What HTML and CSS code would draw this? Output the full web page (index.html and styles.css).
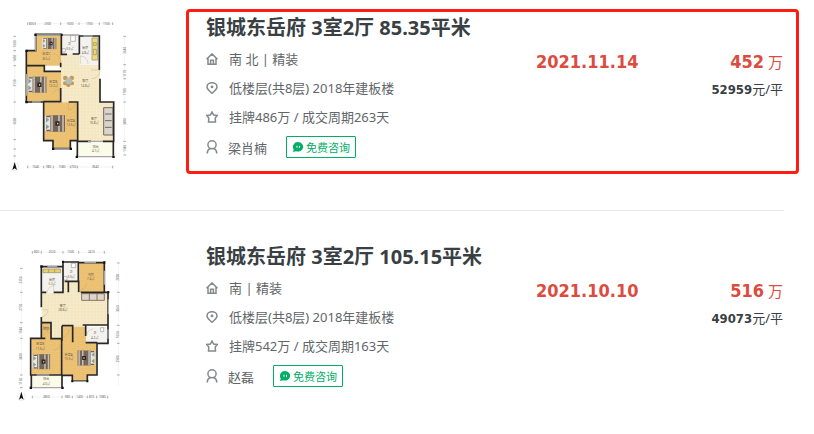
FILE: index.html
```html
<!DOCTYPE html>
<html lang="zh-CN">
<head>
<meta charset="UTF-8">
<meta name="viewport" content="width=device-width, initial-scale=1.0">
<title>银城东岳府 成交记录</title>
<link rel="stylesheet" href="styles.css">
</head>
<body>

<!-- 公用图标 -->
<svg class="defs" width="0" height="0" aria-hidden="true">
  <symbol id="icon-house" viewBox="0 0 12 12">
    <path d="M.5 6.300 6 .9l5.500 5.400M2 5v6.200h2.600V7.200h2.800v4H10V5M4.600 11.200h2.800"/>
  </symbol>
  <symbol id="icon-pin" viewBox="0 0 12 12">
    <path d="M6 11.300C3.700 9 1 7.400 1 4.900a5 4.200 0 0 1 10 0C11 7.400 8.300 9 6 11.300z"/>
    <circle class="dot" cx="6" cy="4.900" r="1.400"/>
  </symbol>
  <symbol id="icon-star" viewBox="0 0 12 12">
    <path d="M6 1 7.600 4.100l3.600.4-2 2.600.3 4H2.500l.3-4-2-2.600 3.600-.4z"/>
  </symbol>
  <symbol id="icon-user" viewBox="0 0 12 14">
    <ellipse cx="6" cy="4.800" rx="4.100" ry="4"/>
    <path d="M4.300 8.500C2.300 9.300 1.200 10.800 1.200 13.500M7.700 8.500c2 .8 3.100 2.300 3.100 5"/>
  </symbol>
  <symbol id="icon-chat" viewBox="0 0 12 12">
    <path class="bubble" d="M6 1a5.300 4.800 0 1 1-2 9.300L1 11l.7-2.500A4.900 4.900 0 0 1 6 1z"/>
    <path class="mark" d="M5 4.800v2M7.500 4.800v2"/>
  </symbol>
  <symbol id="bed" viewBox="0 0 60 50">
    <rect x="0" y="3" width="18" height="44" fill="#e9e5df"/>
    <path d="M3 6l10 8-10 8zM3 27l10 8-10 8z" fill="#7d9fae"/>
    <path d="M4 2h11v4H4zM4 44h11v4H4z" fill="#6b6058"/>
    <rect x="16" y="0" width="44" height="50" fill="#75665c"/>
    <path d="M21 0v50M42 0v50M54 0v50" stroke="#c9bdb0" stroke-width="5"/>
    <path d="M31 18h13v14H31z" fill="#2c2723"/>
    <path d="M36 22l5 3-4 4z" fill="#eee"/>
  </symbol>
  <pattern id="wood" width="24" height="12" patternUnits="userSpaceOnUse">
    <rect width="24" height="12" fill="#edc477"/>
    <path d="M0 1h24M0 7h24M8 1v6M20 7v5" stroke="#e3b562" stroke-width="1"/>
  </pattern>
  <pattern id="tile" width="10" height="10" patternUnits="userSpaceOnUse">
    <rect width="10" height="10" fill="#f6ebcb"/>
    <path d="M0 5l5-5 5 5-5 5z" fill="#f3e5bf"/>
  </pattern>
</svg>

<ul class="deal-list">
  <li class="deal">
    <a class="plan" href="#deal-1" aria-label="户型图">
      <svg viewBox="0 0 420 510" aria-hidden="true">
        <path fill="url(#tile)" d="M182 132h57v32h61v112h40v117H232V276h-50z"/>
        <path fill="url(#wood)" d="M107 75h76v92h-51v18h51v89H80V121h27zM133 277h99v115h-22v24h-50v-24h-27z"/>
        <path fill="#f3f2ef" d="M184 75h51v56h-51zM239 79h58v85h-58z"/>
        <path fill="#fafbe8" d="M231 397h108v42H231z"/>
        <use href="#bed" x="82" y="198" width="58" height="52"/>
        <use href="#bed" x="135" y="314" width="60" height="53"/>
        <use href="#bed" x="119" y="83" width="58" height="35"/>
        <g fill="#c89655"><circle cx="196" cy="204" r="7"/><circle cx="215" cy="204" r="7"/><circle cx="205" cy="224" r="7"/><circle cx="195" cy="220" r="6"/><circle cx="216" cy="220" r="6"/></g>
        <circle cx="206" cy="213" r="10" fill="#a9c0bc"/>
        <path fill="#d9d4cc" stroke="#75665d" stroke-width="3" d="M311 293h28v82h-28zM315 312h20M315 332h20M315 352h20"/>
        <path fill="#f0d879" stroke="#8b8b75" stroke-width="2" d="M276 84h17v66h-17zM280 98h9v8h-9zM280 118h9v16h-9z"/>
        <path fill="#fff" stroke="#9b9b9b" stroke-width="2" d="M212 77h14v17h-14zM186 116h10v10h-10z"/>
        <path class="wall" d="M79 124v152h52v116h28v24h52v-24h22M79 122h28V73h78M184 75v58h17M218 132h19M238 75v58M238 78h60v102M300 206v70h41v118h-33M273 394h-41v45M340 394v43M80 167h53v17h50M182 158v14M182 234v41h-52M206 276h27v118"/>
        <path class="window" d="M107 75h76M184 75h54M250 78h28M79 192v65M160 417h51M231 440h109M264 394h44M107 76v46M96 276h26"/>
        <path class="door" d="M183 158a26 26 0 0 0-26-26M273 180h27a25 25 0 0 1-25 26M158 250a25 25 0 0 1 24-12M205 278v22a24 24 0 0 0 22-22M241 162v-24a23 23 0 0 1 23 24"/>
        <path class="column" d="M103 71h7v7h-7zM182 71h6v7h-6zM76 119h7v7h-7zM76 273h7v7h-7zM156 413h7v7h-7zM209 413h7v7h-7zM227 437h7v7h-7zM337 437h7v7h-7z"/>
        <g class="room">
          <text x="139" y="136">卧室C</text><text x="139" y="149">8.5㎡</text>
          <text x="208" y="104">卫</text><text x="209" y="119">3.5㎡</text>
          <text x="256" y="118">厨房</text><text x="256" y="131">4.8㎡</text>
          <text x="160" y="218">卧室B</text><text x="160" y="231">10.2㎡</text>
          <text x="256" y="217">餐厅</text><text x="256" y="230">14.8㎡</text>
          <text x="213" y="335">卧室A</text><text x="213" y="348">12.6㎡</text>
          <text x="282" y="329">客厅</text><text x="282" y="342">16.8㎡</text>
          <text x="287" y="413">阳台</text><text x="287" y="426">4.7㎡</text>
        </g>
        <path class="ruler" d="M81 41h259M81 471h259M44 79v376M374 79v356"/>
        <path class="ruler-tick" d="M83 37v8M106 37v8M182 37v8M237 37v8M298 37v8M338 37v8M83 467v8M131 467v8M160 467v8M211 467v8M232 467v8M338 467v8M40 79h8M40 122h8M40 167h8M40 276h8M40 389h8M40 417h8M40 438h8M370 79h8M370 164h8M370 206h8M370 276h8M370 394h8M370 435h8"/>
        <g class="measure">
          <text x="95" y="44">800</text><text x="143" y="44">2300</text><text x="210" y="44">1600</text><text x="268" y="44">1760</text><text x="319" y="44">1160</text>
          <text x="107" y="474">1640</text><text x="146" y="474">980</text><text x="186" y="474">1580</text><text x="221" y="474">700</text><text x="286" y="474">3640</text>
          <text transform="translate(47 101) rotate(-90)">1600</text><text transform="translate(47 145) rotate(-90)">1450</text><text transform="translate(47 219) rotate(-90)">3130</text><text transform="translate(47 334) rotate(-90)">3600</text>
          <text transform="translate(377 121) rotate(-90)">2640</text><text transform="translate(377 190) rotate(-90)">1170</text><text transform="translate(377 245) rotate(-90)">1780</text><text transform="translate(377 335) rotate(-90)">3480</text><text transform="translate(377 415) rotate(-90)">1340</text>
        </g>
        <circle class="compass" cx="44" cy="470" r="12"/>
        <path d="M44 456l7 24-7-5-7 5z" fill="#111"/>
      </svg>
    </a>
    <div class="info highlight" id="deal-1">
      <div class="details">
        <h2 class="title">银城东岳府 3室2厅 85.35平米</h2>
        <p class="line"><svg class="icon"><use href="#icon-house"/></svg>南 北 | 精装</p>
        <p class="line"><svg class="icon"><use href="#icon-pin"/></svg>低楼层(共8层) 2018年建板楼</p>
        <p class="line"><svg class="icon"><use href="#icon-star"/></svg>挂牌486万 / 成交周期263天</p>
        <div class="line agent">
          <svg class="icon icon-tall"><use href="#icon-user"/></svg>
          <span class="agent-name">梁肖楠</span>
          <button type="button" class="consult"><svg class="chat"><use href="#icon-chat"/></svg>免费咨询</button>
        </div>
      </div>
      <div class="numbers">
        <div class="date">2021.11.14</div>
        <div class="price">
          <div class="total"><span class="amount">452</span> 万</div>
          <div class="unit"><span class="amount">52959</span>元/平</div>
        </div>
      </div>
    </div>
  </li>

  <li class="deal">
    <a class="plan" href="#deal-2" aria-label="户型图">
      <svg viewBox="0 -3 420 510" aria-hidden="true">
        <path fill="url(#tile)" d="M126 158h64v-34h45v34h89v98h-71v6h-67v55h-33v-69h-27z"/>
        <path fill="url(#wood)" d="M238 69h74v87h-74zM125 249h27v48h32v107H95V295h30zM187 260h72v48h29v98h-26v17h-44v-17h-31z"/>
        <path fill="#f3f2ef" d="M127 83h60v74h-60zM191 67h43v57h-43zM259 260h64v47h-64z"/>
        <path fill="#fafbe8" d="M95 407h91v35H95z"/>
        <use href="#bed" x="97" y="340" width="54" height="50"/>
        <use href="#bed" transform="translate(286 330) scale(-1 1)" width="54" height="48"/>
        <path fill="#ddd5cb" stroke="#8c7364" stroke-width="3" d="M245 161h68v20h-68zM268 161v20M291 161v20"/>
        <path fill="#edcf66" stroke="#8b8b75" stroke-width="2" d="M129 87h53v11h-53zM146 88v9M164 88v9"/>
        <path fill="#fff" stroke="#9b9b9b" stroke-width="2" d="M214 70h13v13h-13zM302 263h9v12h-9zM191 110h10v10h-10z"/>
        <path class="wall" d="M124 202V80h65v77h-28M139 157h-15M189 82V66h46v58h-41M236 68h77v89h-71M220 124h16v33M312 157h12v98h-76M205 157v-33M124 231v64H92v110h56M94 407v36M136 405h50v40M186 406h31v17h45v-18h29v-95h33v-54M125 248h28v48h32v109M186 257v46M186 257h32v50M257 257v31M257 308h35M125 295h11"/>
        <path class="window" d="M142 80h30M253 68h35M313 92v42M325 178v45M94 443h92M217 424h44M324 268v28M110 405h38"/>
        <path class="door" d="M124 209h20a22 22 0 0 1-20 22M142 157a20 20 0 0 1 19-20v20M238 151a21 21 0 0 0 20-20M160 330a24 24 0 0 0 23-20M207 267a22 22 0 0 1-20 24M260 287a20 20 0 0 1 20-20M128 256l20 24M130 288l18-22"/>
        <path class="column" d="M121 76h7v7h-7zM186 62h6v7h-6zM310 64h6v7h-6zM322 153h6v7h-6zM89 440h7v7h-7zM184 440h7v7h-7zM214 421h6v6h-6zM259 421h6v6h-6z"/>
        <g class="room">
          <text x="156" y="122">厨房</text><text x="156" y="135">5.2㎡</text>
          <text x="213" y="98">卫</text><text x="213" y="113">3.3㎡</text>
          <text x="272" y="108">书房</text><text x="272" y="121">7.4㎡</text>
          <text x="188" y="201">客厅</text><text x="188" y="214">28.8㎡</text>
          <text x="138" y="270">储物</text>
          <text x="121" y="316">卧室B</text><text x="121" y="329">11.6㎡</text>
          <text x="206" y="348">卧室A</text><text x="206" y="361">15.5㎡</text>
          <text x="284" y="281">卫</text><text x="284" y="296">4.2㎡</text>
          <text x="139" y="421">阳台</text><text x="139" y="434">4.0㎡</text>
        </g>
        <path class="ruler" d="M95 37h230M95 471h230M64 85v365M355 69v370"/>
        <path class="ruler-tick" d="M97 33v8M124 33v8M189 33v8M236 33v8M313 33v8M97 467v8M186 467v8M217 467v8M262 467v8M290 467v8M323 467v8M60 85h8M60 157h8M60 248h8M60 295h8M60 405h8M60 443h8M351 69h8M351 157h8M351 256h8M351 310h8M351 405h8"/>
        <g class="measure">
          <text x="110" y="40">800</text><text x="156" y="40">2020</text><text x="212" y="40">1500</text><text x="274" y="40">2410</text>
          <text x="139" y="474">2850</text><text x="202" y="474">980</text><text x="239" y="474">1400</text><text x="275" y="474">870</text><text x="307" y="474">1080</text>
          <text transform="translate(67 120) rotate(-90)">2350</text><text transform="translate(67 202) rotate(-90)">2730</text><text transform="translate(67 271) rotate(-90)">1540</text><text transform="translate(67 350) rotate(-90)">3400</text><text transform="translate(67 424) rotate(-90)">1150</text>
          <text transform="translate(358 112) rotate(-90)">2800</text><text transform="translate(358 206) rotate(-90)">3060</text><text transform="translate(358 284) rotate(-90)">1650</text><text transform="translate(358 357) rotate(-90)">2980</text>
        </g>
        <circle class="compass" cx="64" cy="470" r="12"/>
        <path d="M64 455l7 24-7-5-7 5z" fill="#111"/>
      </svg>
    </a>
    <div class="info" id="deal-2">
      <div class="details">
        <h2 class="title">银城东岳府 3室2厅 105.15平米</h2>
        <p class="line"><svg class="icon"><use href="#icon-house"/></svg>南 | 精装</p>
        <p class="line"><svg class="icon"><use href="#icon-pin"/></svg>低楼层(共8层) 2018年建板楼</p>
        <p class="line"><svg class="icon"><use href="#icon-star"/></svg>挂牌542万 / 成交周期163天</p>
        <div class="line agent">
          <svg class="icon icon-tall"><use href="#icon-user"/></svg>
          <span class="agent-name">赵磊</span>
          <button type="button" class="consult"><svg class="chat"><use href="#icon-chat"/></svg>免费咨询</button>
        </div>
      </div>
      <div class="numbers">
        <div class="date">2021.10.10</div>
        <div class="price">
          <div class="total"><span class="amount">516</span> 万</div>
          <div class="unit"><span class="amount">49073</span>元/平</div>
        </div>
      </div>
    </div>
  </li>
</ul>

</body>
</html>
```
FILE: styles.css
```css
body {
  margin: 0;
  background-color: #fff;
  color: #616669;
  font-family: "Noto Sans", "Noto Sans CJK SC", sans-serif;
  font-size: 13px;
}
h2, p, ul {
  margin: 0;
  padding: 0;
}
.defs {
  position: absolute;
}
.deal-list {
  list-style: none;
  margin-right: 30px;
}
.deal {
  display: flex;
  align-items: flex-start;
  padding: 27px 0 30px;
}
.deal:first-child {
  padding-top: 9px;
  border-bottom: 1px solid #e8e8e8;
}
.plan {
  flex: none;
  width: 140px;
  margin-right: 46px;
  padding-top: 1px;
}
.plan svg {
  display: block;
  width: 100%;
}
.info {
  flex: 1;
  display: flex;
  justify-content: space-between;
  margin-right: -15px;
  padding: 0 13px 8px 17px;
  border: 3px solid transparent;
  border-radius: 4px;
}
.highlight {
  border-color: #fe1d12;
}
.title {
  color: #394043;
  font-size: 20px;
  line-height: 32px;
  white-space: nowrap;
}
.line {
  display: flex;
  align-items: center;
  height: 29px;
  white-space: nowrap;
}
.agent {
  height: 32px;
}
.icon {
  flex: none;
  width: 12px;
  height: 12px;
  margin-right: 11px;
  fill: none;
  stroke: #85898c;
  stroke-width: 1.5;
}
.icon-tall {
  height: 14px;
  margin-right: 10px;
}
.dot {
  fill: #85898c;
  stroke: none;
}
.consult {
  display: flex;
  align-items: center;
  height: 22px;
  margin-left: 19px;
  padding: 0 5px;
  border: 1px solid #00ae66;
  border-radius: 1px;
  background-color: #fff;
  color: #00ae66;
  font-family: inherit;
  font-size: 11px;
  cursor: pointer;
}
.chat {
  width: 12px;
  height: 12px;
  margin-right: 2px;
}
.bubble {
  fill: #00ae66;
}
.mark {
  stroke: #fff;
}
.numbers {
  display: flex;
  justify-content: space-between;
  width: 247px;
  padding-top: 36px;
}
.date,
.total {
  color: #db4c3f;
  font-size: 18px;
  line-height: 28px;
}
.date,
.amount {
  font-family: "DejaVu Sans Condensed", "DejaVu Sans", sans-serif;
  font-weight: bold;
}
.price {
  text-align: right;
}
.total {
  font-size: 15px;
}
.total .amount {
  font-size: 18px;
}
.unit {
  color: #394043;
  line-height: 26px;
}

/* 户型图 */
.wall {
  fill: none;
  stroke: #282725;
  stroke-width: 5;
}
.window {
  fill: none;
  stroke: #a5a5a5;
  stroke-width: 4;
}
.door {
  fill: none;
  stroke: #b89b62;
  stroke-width: 1;
}
.column {
  fill: #111;
}
.room {
  fill: #6b604c;
  font-size: 9px;
  text-anchor: middle;
}
.ruler {
  stroke: #d8d8d8;
  stroke-width: 1;
}
.ruler-tick {
  stroke: #888;
  stroke-width: 2;
}
.measure {
  fill: #666;
  font-size: 9px;
  text-anchor: middle;
}
.compass {
  fill: #fff;
  stroke: #ccc;
}
```
